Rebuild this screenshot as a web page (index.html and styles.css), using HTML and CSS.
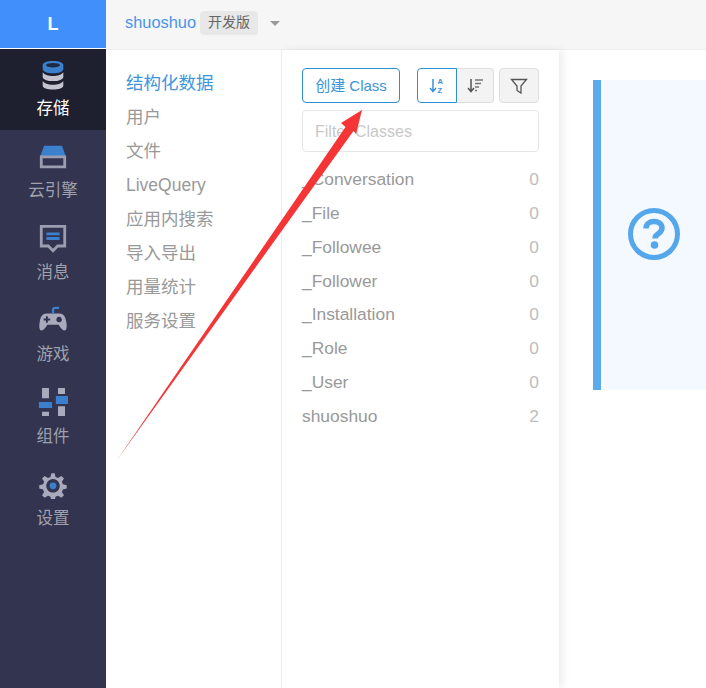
FILE: index.html
```html
<!DOCTYPE html>
<html lang="zh-CN">
<head>
<meta charset="utf-8">
<title>shuoshuo</title>
<link rel="stylesheet" href="styles.css">
</head>
<body>
<div class="app">
  <aside class="sidebar">
    <div class="logo">L</div>
    <a class="side-item active">
      <svg class="side-icon" viewBox="0 0 32 32">
        <path class="g" d="M5 13v5c0 2.500 5 4.500 11 4.500s11-2 11-4.500v-5c-1.500 2.500-6 4-11 4s-9.500-1.500-11-4z"/>
        <path class="g" d="M5 22.500v5c0 2.500 5 4 11 4s11-1.500 11-4v-5c-1.500 2.500-6 4-11 4s-9.500-1.500-11-4z"/>
        <path class="b" d="M5 5.500c0-3 5-4.500 11-4.500s11 1.500 11 4.500v4c0 3-5 4.500-11 4.500s-11-1.500-11-4.500z"/>
        <ellipse class="d" cx="16" cy="5.500" rx="7.500" ry="2.400"/>
      </svg>
      <span>存储</span>
    </a>
    <a class="side-item">
      <svg class="side-icon" viewBox="0 0 32 32">
        <path class="b" d="M6.500 5h19l4.500 12h-28z"/>
        <path class="o" d="M3.500 17h25v10.500h-25z"/>
      </svg>
      <span>云引擎</span>
    </a>
    <a class="side-item">
      <svg class="side-icon" viewBox="0 0 32 32">
        <path class="o" d="M3.500 3.500h25v21h-7.500l-5 5-5-5h-7.500z"/>
        <path class="bs" d="M9 11.500h14M9 16.500h14"/>
      </svg>
      <span>消息</span>
    </a>
    <a class="side-item">
      <svg class="side-icon" viewBox="0 0 32 32">
        <path class="g" fill-rule="evenodd" d="M9 9h14c4 0 6 3 7 8 .8 4.500 1 9-1 10-2.500 1-5-3-7-6h-12c-2 3-4.500 7-7 6-2-1-1.800-5.500-1-10 1-5 3-8 7-8zM8.500 12v2.500h-2.500v2h2.500v2.500h2v-2.500h2.500v-2h-2.500v-2.500zM22.500 12.500a3 3 0 1 0 .01 0z"/>
        <path class="bl" d="M16 9v-3.500q0-2.500 2.500-2.500h4"/>
      </svg>
      <span>游戏</span>
    </a>
    <a class="side-item">
      <svg class="side-icon" viewBox="0 0 32 32">
        <path class="g" d="M4.300 1h7.400v11h-7.400zM4.300 26.500h7.400v4.500h-7.400zM21.300 1h7.500v6.500h-7.500zM21.300 20.500h7.500v10.500h-7.500z"/>
        <path class="b" d="M1 16h14v6.500h-14zM19 9.500h13v8.500h-13z"/>
      </svg>
      <span>组件</span>
    </a>
    <a class="side-item">
      <svg class="side-icon" viewBox="0 0 32 32">
        <g transform="translate(1.600 3.500) scale(.9)">
          <path class="g" fill-rule="evenodd" d="M14 1h4l1 4.500 3 1.300 4-2.500 3 3-2.500 4 1.300 3 4.500 1v4l-4.500 1-1.300 3 2.500 4-3 3-4-2.500-3 1.300-1 4.500h-4l-1-4.500-3-1.300-4 2.500-3-3 2.500-4-1.300-3-4.500-1v-4l4.500-1 1.300-3-2.500-4 3-3 4 2.500 3-1.300zM16 8a8 8 0 1 0 .01 0z"/>
          <circle class="b" cx="16" cy="16" r="4"/>
        </g>
      </svg>
      <span>设置</span>
    </a>
  </aside>
  <div class="content">
    <header class="topbar">
      <span class="app-name">shuoshuo</span>
      <span class="tag">开发版</span>
      <span class="caret"></span>
    </header>
    <div class="panes">
      <nav class="subnav">
        <a class="current">结构化数据</a>
        <a>用户</a>
        <a>文件</a>
        <a>LiveQuery</a>
        <a>应用内搜索</a>
        <a>导入导出</a>
        <a>用量统计</a>
        <a>服务设置</a>
      </nav>
      <section class="classes">
        <div class="toolbar">
          <button class="create">创建 Class</button>
          <div class="sort-group">
            <button class="sort on">
              <svg class="tool-icon" viewBox="0 0 18 18">
                <path class="line-blue" d="M5 2v12M2 11l3 3.500 3-3.500"/>
                <text class="az" x="9.500" y="7">A</text>
                <text class="az" x="9.500" y="15.500">Z</text>
              </svg>
            </button>
            <button class="sort">
              <svg class="tool-icon" viewBox="0 0 18 18">
                <path class="line-dark" d="M5 2v12M2 11l3 3.500 3-3.500"/>
                <path class="line-thin" d="M9 3h8M9 6.500h6M9 10h4M9 13.500h2"/>
              </svg>
            </button>
          </div>
          <button class="filter-btn">
            <svg class="tool-icon" viewBox="0 0 18 18">
              <path class="line-dark1" d="M1.500 2.500h15l-5.500 6.500v7l-4-2.500v-4.500z"/>
            </svg>
          </button>
        </div>
        <input class="search" placeholder="Filter Classes">
        <ul class="class-list">
          <li><span>_Conversation</span><span>0</span></li>
          <li><span>_File</span><span>0</span></li>
          <li><span>_Followee</span><span>0</span></li>
          <li><span>_Follower</span><span>0</span></li>
          <li><span>_Installation</span><span>0</span></li>
          <li><span>_Role</span><span>0</span></li>
          <li><span>_User</span><span>0</span></li>
          <li><span>shuoshuo</span><span>2</span></li>
        </ul>
      </section>
      <main class="main">
        <div class="callout">
          <svg class="help" viewBox="0 0 52 52">
            <circle class="help-ring" cx="26" cy="26" r="23.500"/>
            <path class="help-q" d="M18 20.500c0-4.500 3.500-7 8-7s8 2.500 8 6.500c0 3-1.800 4.500-4 6-2 1.300-3 2.200-3 4.500"/>
            <circle class="help-dot" cx="26.500" cy="37" r="3.800"/>
          </svg>
        </div>
      </main>
    </div>
  </div>
</div>
<svg class="arrow" viewBox="0 0 706 688">
  <path class="arrow-body" d="M362 110L356 134L353.500 131L117 460L345.500 127L341 123Z"/>
</svg>
</body>
</html>
```

FILE: styles.css
```css
* { box-sizing: border-box; }
html, body { margin: 0; height: 100%; overflow: hidden; background: #fff; }
body { font-family: "Liberation Sans", "Noto Sans CJK SC", sans-serif; }
a { display: block; }

.app { display: flex; height: 688px; }

.sidebar { width: 106px; flex: none; background: #33344f; display: flex; flex-direction: column; }
.logo { height: 49px; flex: none; background: #418ffa; border-bottom: 1px solid #fff; color: #fff; font-size: 18px; font-weight: 700; display: flex; align-items: center; justify-content: center; }
.side-item { height: 82px; flex: none; display: flex; flex-direction: column; align-items: center; padding-top: 11px; color: #a0a1ac; font-size: 16.500px; line-height: 24px; font-family: "Noto Sans CJK SC", sans-serif; }
.side-icon { width: 30px; height: 30px; margin-bottom: 6px; }
.side-item.active { background: #1e1f2f; color: #fff; height: 81px; }
.side-item.active .side-icon { margin-bottom: 5px; }
.g { fill: #c3c4d0; }
.side-item:not(.active) .g { fill: #a9aabb; }
.b { fill: #3b80cc; }
.d { fill: #1e2a45; }
.o { fill: none; stroke: #9c9db0; stroke-width: 3; }
.bs { stroke: #3b80cc; stroke-width: 3; fill: none; }
.bl { stroke: #3b80cc; stroke-width: 2.500; fill: none; }

.content { flex: 1; min-width: 0; display: flex; flex-direction: column; }
.topbar { height: 50px; flex: none; background: #f6f6f7; border-bottom: 1px solid #eeeeee; display: flex; align-items: center; padding: 0 0 5px 19px; }
.app-name { color: #4a94ea; font-size: 16.400px; }
.tag { margin: 2px 0 0 4px; width: 58px; height: 24px; background: #e8e8e8; border-radius: 4px; color: #666; font-size: 14px; line-height: 20px; text-align: center; font-family: "Noto Sans CJK SC", sans-serif; }
.caret { margin-left: 12px; margin-top: 2px; border: 5px solid transparent; border-top-color: #999; border-bottom: 0; }

.panes { flex: 1; display: flex; min-height: 0; }
.subnav { width: 176px; flex: none; border-right: 1px solid #eeeeee; padding: 16px 0 0 20px; font-size: 17.500px; line-height: 34px; color: #999; }
.subnav .current { color: #3f95dc; }

.classes { width: 277px; flex: none; padding: 18px 19px 0 20px; box-shadow: 4px 0 8px rgba(0, 0, 0, .07); position: relative; }
.toolbar { display: flex; height: 35px; }
.toolbar button { padding: 0; height: 35px; display: flex; align-items: center; justify-content: center; font-family: inherit; }
.toolbar .create { width: 98px; padding-bottom: 3px; background: #fff; border: 1px solid #2f8fd0; border-radius: 4px; color: #3a94d8; font-size: 15px; }
.sort-group { display: flex; margin-left: 17px; }
.sort { width: 37px; background: #f3f3f3; border: 1px solid #dedede; border-left: 0; border-radius: 0 4px 4px 0; }
.sort.on { width: 40px; background: #fff; border: 1px solid #2f8fd0; border-radius: 4px 0 0 4px; }
.filter-btn { width: 40px; margin-left: 5px; background: #f3f3f3; border: 1px solid #dedede; border-radius: 4px; }
.tool-icon { width: 18px; height: 18px; }
.line-blue { fill: none; stroke: #3a94d8; stroke-width: 1.500; }
.line-dark { fill: none; stroke: #555; stroke-width: 1.500; }
.line-dark1 { fill: none; stroke: #555; stroke-width: 1.300; }
.line-thin { fill: none; stroke: #777; stroke-width: 1.300; }
.az { fill: #3a94d8; font-size: 7.500px; font-weight: 700; }
.search { display: block; width: 237px; height: 42px; margin-top: 7px; padding: 2px 12px 0; border: 1px solid #e6e6e6; border-radius: 4px; font-family: inherit; font-size: 16px; outline: 0; }
.search::placeholder { color: #c8c8c8; opacity: 1; }
.class-list { list-style: none; margin: 11px 0 0; padding: 0 1px 0 0; font-size: 17.400px; line-height: 33.850px; color: #999; }
.class-list li { display: flex; justify-content: space-between; }
.class-list li span:last-child { color: #bdbdbd; }

.main { flex: 1; min-width: 0; padding: 30px 0 0 34px; }
.callout { height: 310px; background: #f4f9ff; border-left: 8px solid #5baaee; display: flex; align-items: center; padding-left: 27px; }
.help { width: 52px; height: 52px; margin-bottom: 2px; }
.help-ring { fill: none; stroke: #55a7ec; stroke-width: 5; }
.help-q { fill: none; stroke: #55a7ec; stroke-width: 5.500; }
.help-dot { fill: #55a7ec; }

.arrow { position: absolute; left: 0; top: 0; width: 706px; height: 688px; pointer-events: none; }
.arrow-body { fill: #f53535; }
```
